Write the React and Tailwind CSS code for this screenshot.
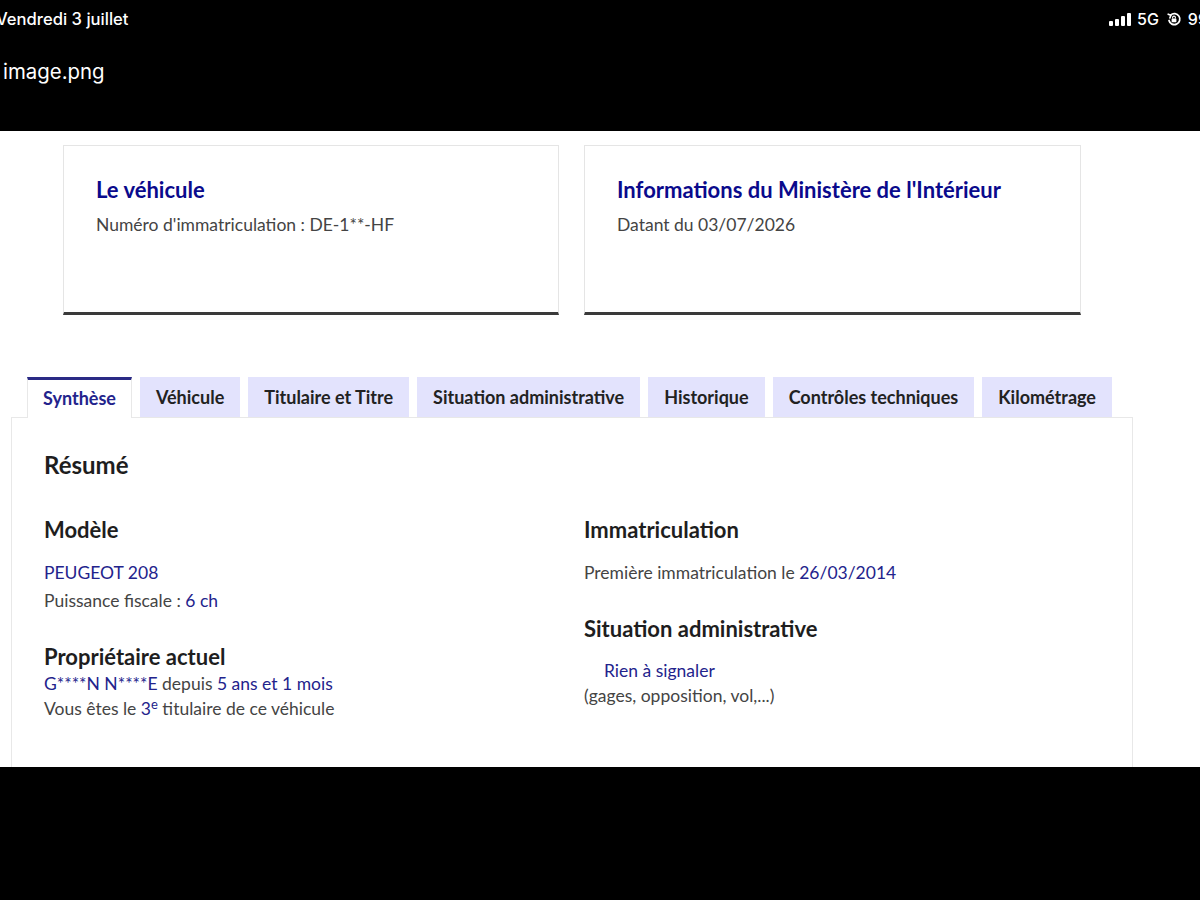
import React from "react";

const tabs = [
  "Synthèse",
  "Véhicule",
  "Titulaire et Titre",
  "Situation administrative",
  "Historique",
  "Contrôles techniques",
  "Kilométrage",
];

function StatusBar() {
  return (
    <div className="h-[131px] bg-black text-white font-['Inter',sans-serif]">
      <div className="flex items-center justify-between h-[38px]">
        <span className="ml-[-4px] text-[16.6px] font-medium">Vendredi 3 juillet</span>
        <div className="flex items-center gap-[5px] mr-[-8px]">
          {/* signal bars */}
          <div className="flex items-end gap-[2px] h-[13px]">
            <div className="w-[4px] h-[5px] bg-white rounded-[1px]" />
            <div className="w-[4px] h-[7px] bg-white rounded-[1px]" />
            <div className="w-[4px] h-[10px] bg-white rounded-[1px]" />
            <div className="w-[4px] h-[13px] bg-white rounded-[1px]" />
          </div>
          <span className="text-[16px] font-medium ml-[1px]">5G</span>
          <svg width="16" height="16" viewBox="0 0 16 16" className="ml-[2px]">
            <path d="M3 9.5A5.5 5.5 0 1 0 4.6 4.1" fill="none" stroke="white" strokeWidth="1.8" strokeLinecap="round" />
            <path d="M2.2 3.2 L4.9 4.3 L3.9 6.9" fill="none" stroke="white" strokeWidth="1.6" strokeLinecap="round" strokeLinejoin="round" />
            <rect x="5.6" y="7.4" width="4.8" height="3.8" rx="0.6" fill="white" />
            <path d="M6.6 7.6V6.5a1.4 1.4 0 0 1 2.8 0v1.1" fill="none" stroke="white" strokeWidth="1.1" />
          </svg>
          <span className="text-[16px] font-medium ml-[1px]">99</span>
        </div>
      </div>
      <div className="mt-[15px] ml-[3px] text-[20.4px] leading-[38px]">image.png</div>
    </div>
  );
}

function InfoCard({ title, children }) {
  return (
    <div className="h-[170px] bg-white border border-[#e5e5e5] border-b-[3px] border-b-[#3a3a3a] pl-[32px] pt-[28px]">
      <h2 className="text-[22px] leading-[32px] font-bold text-[#0a0a8c]">{title}</h2>
      <p className="mt-[7px] text-[17.5px] leading-[24px] text-[#444]">{children}</p>
    </div>
  );
}

function Heading({ children, className = "" }) {
  return <h3 className={"text-[22px] leading-[28px] font-bold text-[#1e1e1e] " + className}>{children}</h3>;
}

export default function App() {
  return (
    <div className="w-[1200px] h-[900px] bg-black overflow-hidden font-['Lato',sans-serif]">
      <StatusBar />

      <div className="h-[636px] bg-white overflow-hidden">
        {/* cards */}
        <div className="flex gap-[25px] pt-[14px] pl-[63px]">
          <div className="w-[496px]">
            <InfoCard title="Le véhicule">Numéro d'immatriculation : DE-1**-HF</InfoCard>
          </div>
          <div className="w-[497px]">
            <InfoCard title="Informations du Ministère de l'Intérieur">Datant du 03/07/2026</InfoCard>
          </div>
        </div>

        {/* tabs */}
        <div className="mt-[62px] pl-[11px] w-[1133px]">
          <div className="flex gap-[8px] pl-[16px] relative z-10">
            {tabs.map((t, i) =>
              i === 0 ? (
                <div
                  key={t}
                  className="h-[41px] px-[15px] pb-[2px] flex items-center bg-white border-t-[3px] border-t-[#2a2a85] border-x border-x-[#e8e8e8] text-[18px] font-bold text-[#23238c] mb-[-1px]"
                >
                  {t}
                </div>
              ) : (
                <div
                  key={t}
                  className="h-[40px] px-[16px] flex items-center bg-[#e3e3fd] text-[18px] font-bold text-[#222]"
                >
                  {t}
                </div>
              )
            )}
          </div>

          {/* panel */}
          <div className="h-[400px] border border-[#e8e8e8] pl-[32px] pt-[31px]">
            <h2 className="text-[24px] leading-[32px] font-bold text-[#1e1e1e]">Résumé</h2>
            <div className="mt-[35px] grid grid-cols-[540px_1fr]">
              <div>
                <Heading>Modèle</Heading>
                <p className="mt-[15px] text-[17.5px] leading-[28px] text-[#23238c]">PEUGEOT 208</p>
                <p className="text-[17.5px] leading-[28px] text-[#444]">
                  Puissance fiscale : <span className="text-[#23238c]">6 ch</span>
                </p>
                <Heading className="mt-[28px]">Propriétaire actuel</Heading>
                <p className="text-[17.5px] leading-[25px] text-[#444]">
                  <span className="text-[#23238c]">G****N N****E</span> depuis{" "}
                  <span className="text-[#23238c]">5 ans et 1 mois</span>
                </p>
                <p className="text-[17.5px] leading-[25px] text-[#444]">
                  Vous êtes le{" "}
                  <span className="text-[#23238c]">
                    3<sup className="text-[13px]">e</sup>
                  </span>{" "}
                  titulaire de ce véhicule
                </p>
              </div>
              <div>
                <Heading>Immatriculation</Heading>
                <p className="mt-[15px] text-[17.5px] leading-[28px] text-[#444]">
                  Première immatriculation le <span className="text-[#23238c]">26/03/2014</span>
                </p>
                <Heading className="mt-[28px]">Situation administrative</Heading>
                <p className="mt-[15px] pl-[20px] text-[17.5px] leading-[25px] text-[#23238c]">Rien à signaler</p>
                <p className="text-[17.5px] leading-[25px] text-[#444]">(gages, opposition, vol,...)</p>
              </div>
            </div>
          </div>
        </div>
      </div>
    </div>
  );
}
